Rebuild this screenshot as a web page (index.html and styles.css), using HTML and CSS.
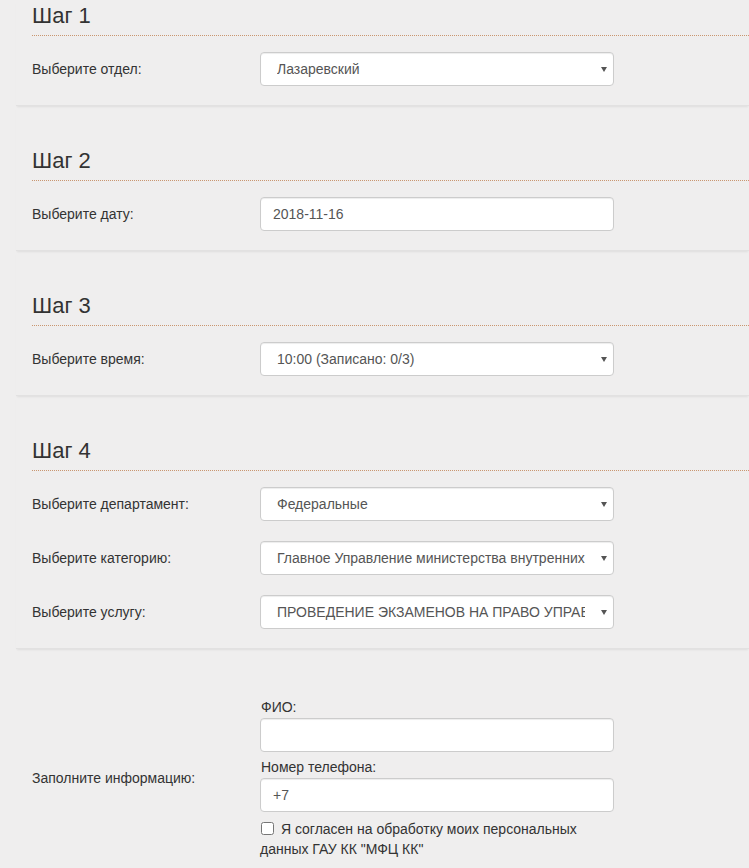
FILE: index.html
```html
<!DOCTYPE html>
<html lang="ru">
<head>
    <meta charset="UTF-8">
    <meta name="viewport" content="width=device-width, initial-scale=1.0">
    <title>Запись на приём</title>
    <link rel="stylesheet" href="styles.css">
</head>
<body>
    <div class="page">
        <section class="step step-first">
            <h2 class="step-title">Шаг 1</h2>
            <div class="field-row">
                <label class="field-label" for="office">Выберите отдел:</label>
                <div class="select-wrap">
                    <select id="office" class="form-control">
                        <option>Лазаревский</option>
                    </select>
                </div>
            </div>
        </section>

        <section class="step">
            <h2 class="step-title">Шаг 2</h2>
            <div class="field-row">
                <label class="field-label" for="date">Выберите дату:</label>
                <input type="text" id="date" class="form-control" value="2018-11-16">
            </div>
        </section>

        <section class="step">
            <h2 class="step-title">Шаг 3</h2>
            <div class="field-row">
                <label class="field-label" for="time">Выберите время:</label>
                <div class="select-wrap">
                    <select id="time" class="form-control">
                        <option>10:00 (Записано: 0/3)</option>
                    </select>
                </div>
            </div>
        </section>

        <section class="step">
            <h2 class="step-title">Шаг 4</h2>
            <div class="field-row">
                <label class="field-label" for="department">Выберите департамент:</label>
                <div class="select-wrap">
                    <select id="department" class="form-control">
                        <option>Федеральные</option>
                    </select>
                </div>
            </div>
            <div class="field-row">
                <label class="field-label" for="category">Выберите категорию:</label>
                <div class="select-wrap">
                    <select id="category" class="form-control">
                        <option>Главное Управление министерства внутренних дел России по Краснодарскому краю</option>
                    </select>
                </div>
            </div>
            <div class="field-row">
                <label class="field-label" for="service">Выберите услугу:</label>
                <div class="select-wrap">
                    <select id="service" class="form-control">
                        <option>ПРОВЕДЕНИЕ ЭКЗАМЕНОВ НА ПРАВО УПРАВЛЕНИЯ ТРАНСПОРТНЫМИ СРЕДСТВАМИ</option>
                    </select>
                </div>
            </div>
        </section>

        <section class="step step-info">
            <div class="field-row">
                <span class="field-label">Заполните информацию:</span>
                <div class="info-fields">
                    <label class="sub-label" for="fio">ФИО:</label>
                    <input type="text" id="fio" class="form-control">
                    <label class="sub-label" for="phone">Номер телефона:</label>
                    <input type="text" id="phone" class="form-control" value="+7">
                    <label class="agree">
                        <input type="checkbox" class="agree-box">
                        Я согласен на обработку моих персональных данных ГАУ КК "МФЦ КК"
                    </label>
                </div>
            </div>
        </section>
    </div>
</body>
</html>
```

FILE: styles.css
```css
body {
    font-family: 'Liberation Sans', Arial, sans-serif;
    font-size: 14px;
    line-height: 20px;
    margin: 0;
    padding: 0;
    background-color: #efeeee;
    color: #333;
}

.step {
    margin-left: 16px;
    padding: 43px 0 19px 16px;
    border-bottom: 1px solid #e2e1e1;
    box-shadow: 0 2px 2px -1px rgba(0,0,0,0.07);
}

.step-first {
    padding-top: 4px;
}

.step-info {
    padding-top: 48px;
    border-bottom: none;
    box-shadow: none;
}

.step-title {
    margin: 0 0 16px;
    padding-bottom: 7px;
    font-size: 22px;
    line-height: 24px;
    font-weight: normal;
    color: #333;
    border-bottom: 1px dotted #c99670;
}

.field-row {
    display: grid;
    grid-template-columns: 228px 354px;
    align-items: center;
}

.field-row + .field-row {
    margin-top: 20px;
}

.field-label {
    color: #333;
}

.form-control {
    display: block;
    width: 100%;
    height: 34px;
    box-sizing: border-box;
    padding: 6px 12px;
    font-family: inherit;
    font-size: 14px;
    color: #555;
    background-color: #fff;
    border: 1px solid #ccc;
    border-radius: 4px;
    box-shadow: inset 0 1px 1px rgba(0,0,0,0.075);
    outline: none;
}

.select-wrap {
    position: relative;
}

.select-wrap select {
    appearance: none;
    -webkit-appearance: none;
    padding-left: 16px;
    padding-right: 28px;
}

.select-wrap::after {
    content: "";
    position: absolute;
    right: 7px;
    top: 15px;
    border-left: 3px solid transparent;
    border-right: 3px solid transparent;
    border-top: 5px solid #555;
    pointer-events: none;
}

.info-fields {
    display: flex;
    flex-direction: column;
}

.sub-label {
    display: block;
    margin: 0 0 1px 1px;
}

.info-fields .form-control {
    margin-bottom: 5px;
}

.agree {
    display: block;
    margin-top: 2px;
}

.agree-box {
    width: 13px;
    height: 13px;
    margin: 0 3px 0 1px;
    vertical-align: -1px;
}
```
